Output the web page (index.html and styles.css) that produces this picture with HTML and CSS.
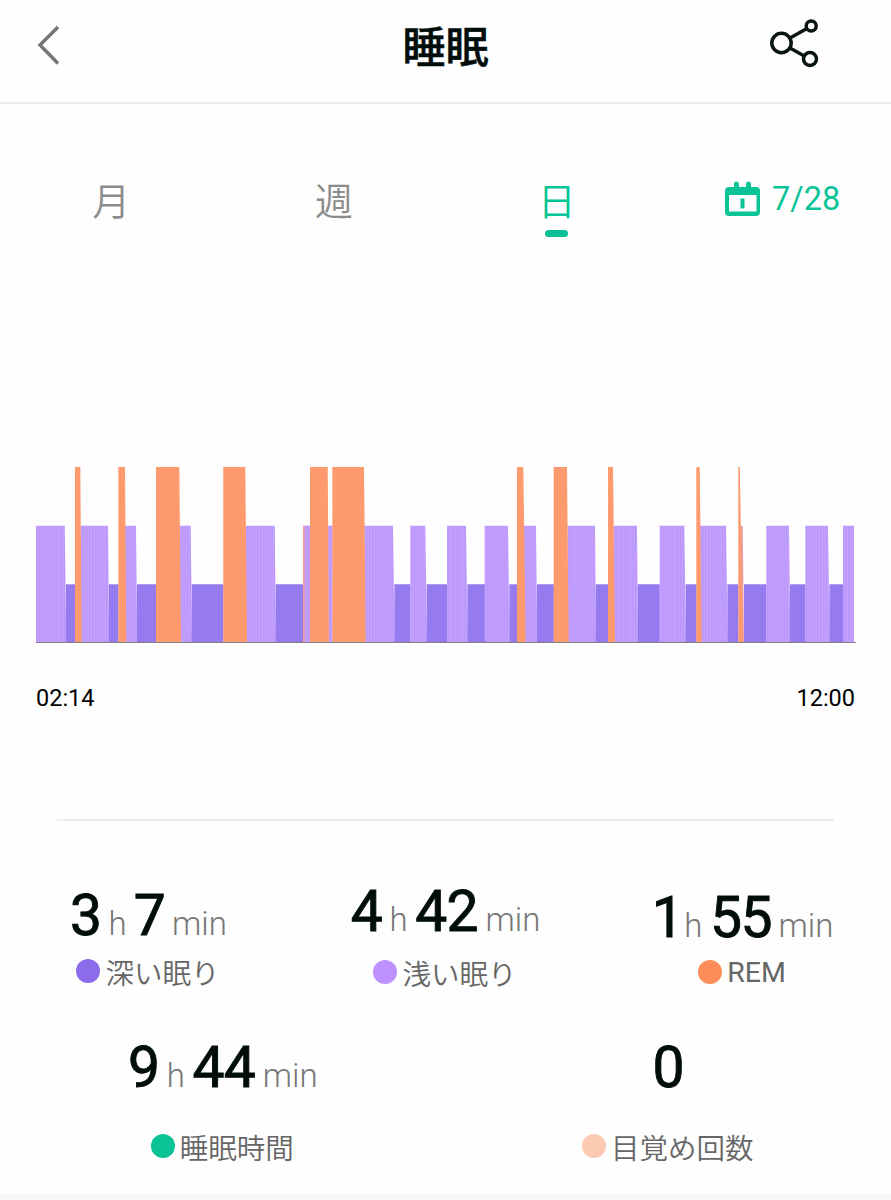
FILE: index.html
```html
<!DOCTYPE html>
<html lang="ja">
<head>
  <meta charset="UTF-8">
  <meta name="viewport" content="width=device-width, initial-scale=1.0">
  <title>睡眠</title>
  <link rel="stylesheet" href="styles.css">
</head>
<body>

  <header class="header">
    <svg class="back" viewBox="0 0 26 42" width="26" height="42">
      <path d="M22 3 L4 21 L22 39.500" />
    </svg>
    <h1>睡眠</h1>
    <svg class="share" viewBox="0 0 50 50" width="50" height="50">
      <circle cx="12.500" cy="25" r="9.700" />
      <circle cx="42.200" cy="8" r="5" />
      <circle cx="41" cy="41" r="6.500" />
      <path d="M21 20 L37.500 10.800 M21 30 L35.300 38" />
    </svg>
  </header>

  <nav class="tabs">
    <a class="tab">月</a>
    <a class="tab">週</a>
    <a class="tab active">日</a>
    <a class="date">
      <svg viewBox="0 0 36 36" width="36" height="36">
        <path fill-rule="evenodd" d="M9 3a2.500 2.500 0 0 1 5 0v3h7v-3a2.500 2.500 0 0 1 5 0v3h5a4 4 0 0 1 4 4v21a4 4 0 0 1-4 4h-27a4 4 0 0 1-4-4v-21a4 4 0 0 1 4-4h5zM4 14v16.500h27.500v-16.500z" />
        <path d="M15.500 17.500h4v10h-4z" />
      </svg>
      <span>7/28</span>
    </a>
  </nav>

  <section class="chart">
    <svg id="sleepChart" viewBox="0 0 820 177" width="820" height="177"></svg>
    <div class="axis">
      <span>02:14</span>
      <span>12:00</span>
    </div>
  </section>

  <section class="summary">
    <div class="row">
      <div class="stat deep">
        <p class="value"><b>3</b> h <b>7</b> min</p>
        <p class="label"><i class="dot"></i><span>深い眠り</span></p>
      </div>
      <div class="stat light">
        <p class="value"><b>4</b> h <b>42</b> min</p>
        <p class="label"><i class="dot"></i><span>浅い眠り</span></p>
      </div>
      <div class="stat rem">
        <p class="value"><b>1</b> h <b>55</b> min</p>
        <p class="label"><i class="dot"></i><span>REM</span></p>
      </div>
    </div>
    <div class="row totals">
      <div class="stat total">
        <p class="value"><b>9</b> h <b>44</b> min</p>
        <p class="label"><i class="dot"></i><span>睡眠時間</span></p>
      </div>
      <div class="stat awake">
        <p class="value"><b>0</b></p>
        <p class="label"><i class="dot"></i><span>目覚め回数</span></p>
      </div>
    </div>
  </section>

  <script src="chart.js"></script>
</body>
</html>
```
FILE: styles.css
```css
body {
  font-family: Roboto, "Noto Sans CJK JP", sans-serif;
  background-color: #fefefe;
  color: #000;
  margin: 0;
  height: 1193px;
  border-bottom: 7px solid #f7f7f7;
}

h1,
p {
  margin: 0;
}

.header {
  display: grid;
  grid-template-columns: 1fr auto 1fr;
  align-items: start;
  box-sizing: border-box;
  height: 104px;
  padding: 18px 36px 0;
  border-bottom: 2px solid #ededed;
}

.header h1 {
  padding-top: 2px;
  font-size: 43px;
  line-height: 56px;
  font-weight: 500;
  color: #000d0a;
  -webkit-text-stroke: 0.5px #000d0a;
}

.back {
  margin-top: 6px;
  fill: none;
  stroke: #757575;
  stroke-width: 3.4;
}

.share {
  justify-self: end;
  margin-right: 36px;
  fill: none;
  stroke: #0a1513;
  stroke-width: 3.5;
}

.tabs {
  display: grid;
  grid-template-columns: repeat(4, 1fr);
  height: 363px;
  padding-top: 71px;
  box-sizing: border-box;
}

.tab {
  display: flex;
  flex-direction: column;
  align-items: center;
  font-size: 38px;
  line-height: 55px;
  font-weight: 350;
  color: #8c8c8c;
}

.tab.active {
  color: #00c597;
}

.tab.active::after {
  content: "";
  width: 23px;
  height: 7px;
  border-radius: 4px;
  background-color: #0abf95;
}

.date {
  display: flex;
  align-items: flex-start;
  justify-content: center;
  gap: 11px;
  padding: 6px 0 0 6px;
  font-size: 32.5px;
  line-height: 36px;
  color: #0ac498;
}

.date svg {
  fill: #0ac498;
}

.chart {
  height: 352px;
  margin: 0 36px;
}

.chart svg {
  display: block;
}

.axis {
  display: flex;
  justify-content: space-between;
  padding-top: 40px;
  font-size: 23.5px;
  line-height: 28px;
}

.bar-deep {
  fill: #977df0;
}

.bar-light {
  fill: #c4a0ff;
}

.bar-rem {
  fill: #ff9d70;
}

.bar-blend {
  fill: #f7a09c;
}

.summary {
  margin: 0 57px;
  border-top: 2px solid #ededed;
}

.row {
  display: grid;
  grid-template-columns: repeat(3, 1fr);
  margin: 0 -57px;
  height: 152px;
  padding-top: 58px;
}

.row.totals {
  grid-template-columns: repeat(2, 1fr);
  padding-top: 4px;
}

.stat {
  text-align: center;
}

.value {
  font-size: 33px;
  line-height: 66px;
  font-weight: 300;
  color: #777;
  white-space: nowrap;
  word-spacing: -0.5px;
}

.value b {
  font-size: 57px;
  font-weight: 400;
  letter-spacing: -0.7px;
  color: #000d0a;
  -webkit-text-stroke: 0.9px #000d0a;
}

.deep .value {
  padding-top: 4px;
  word-spacing: -1px;
}

.rem .value {
  padding-top: 6px;
}

.rem .value b {
  letter-spacing: -1.5px;
}

.rem .value b:first-child {
  letter-spacing: -7px;
}

.label {
  display: flex;
  align-items: center;
  justify-content: center;
  gap: 5px;
  padding-right: 1px;
  font-size: 28.5px;
  line-height: 42px;
  font-weight: 350;
  color: #666;
}

.label span {
  padding-top: 8px;
  margin-bottom: -1px;
}

.deep .label {
  margin-top: -11px;
}

.light .label {
  margin-top: -6px;
}

.rem .label {
  margin-top: -9px;
  font-weight: 400;
}

.rem .label span {
  padding-top: 2px;
}

.totals .label {
  margin-top: 12px;
}

.dot {
  width: 24px;
  height: 24px;
  border-radius: 50%;
}

.deep .dot {
  background-color: #8c6cec;
}

.light .dot {
  background-color: #bf90ff;
}

.rem .dot {
  background-color: #fd8d5b;
}

.total .dot {
  background-color: #0ac294;
}

.awake .dot {
  background-color: #fcc9b2;
}
```
FILE: chart.js
```js
// [type, left, right at the top, right at the base]
const bars = [
  ['light', 0, 28.7, 30.3], ['deep', 30, 39.3, 39.3], ['light', 44.5, 72, 73.3],
  ['rem', 39, 44.3, 45.7], ['deep', 73, 82.5, 82.5], ['light', 89, 100, 101.3],
  ['rem', 82.3, 89, 90.3], ['deep', 101, 120.3, 120.3], ['light', 143.5, 154.7, 156],
  ['rem', 120, 143.3, 145], ['deep', 155.7, 187.5, 187.5], ['light', 210, 238.7, 240],
  ['rem', 187.3, 209.3, 211], ['deep', 239.7, 267.3, 267.3], ['light', 267, 274.3, 274.3],
  ['blend', 267, 268.6, 268.6], ['light', 291.5, 296.6, 296.6], ['rem', 274, 291.7, 293],
  ['light', 328.3, 357, 358.7], ['rem', 296.3, 328, 329.7], ['deep', 358.4, 374.5, 374.5],
  ['light', 374.3, 389.3, 391], ['deep', 390.7, 411.2, 411.2], ['light', 411, 430, 431.7],
  ['deep', 431.4, 449, 449], ['light', 448.7, 472, 473.7], ['deep', 473.4, 481.2, 481.2],
  ['light', 487.5, 500, 501.3], ['rem', 481, 487.3, 489.7], ['deep', 501, 517.9, 517.9],
  ['light', 531.5, 559, 560], ['rem', 517.7, 531, 532.7], ['deep', 559.7, 572.2, 572.2],
  ['light', 577.5, 601, 602], ['rem', 572, 577, 579], ['deep', 601.7, 623.8, 623.8],
  ['light', 623.7, 648.3, 650], ['deep', 649.7, 660.5, 660.5], ['light', 664, 690, 691.7],
  ['rem', 660.3, 663.7, 665.7], ['deep', 691.4, 702.5, 702.5], ['blend', 703, 706.7, 708],
  ['rem', 702.3, 703.8, 706.8], ['deep', 708, 730.5, 730.5], ['light', 730.3, 753, 754.3],
  ['deep', 754, 769.5, 769.5], ['light', 769.3, 792, 793.7], ['deep', 793.4, 807.2, 807.2],
  ['light', 807, 818, 818]
];

const tops = { rem: 0, light: 58.7, blend: 58.7, deep: 117.3 };
const base = 175;

let shapes = '<defs><pattern id="minutes" width="2.8" height="10" patternUnits="userSpaceOnUse">' +
  '<rect width="1.2" height="10" fill="#7a55dd" fill-opacity="0.14" /></pattern>' +
  '<pattern id="remMinutes" width="2.8" height="10" patternUnits="userSpaceOnUse">' +
  '<rect width="1.2" height="10" fill="#e07a50" fill-opacity="0.14" /></pattern></defs>';

bars.forEach(([type, left, right, foot]) => {
  const points = `${left},${base} ${left},${tops[type]} ${right},${tops[type]} ${foot},${base}`;
  const stripes = type === 'rem' ? 'remMinutes' : 'minutes';
  shapes += `<polygon class="bar-${type}" points="${points}" />`;
  shapes += `<polygon fill="url(#${stripes})" points="${points}" />`;
});

shapes += '<rect y="175" width="820" height="1" fill="#858085" />';
document.getElementById('sleepChart').innerHTML = shapes;
```
